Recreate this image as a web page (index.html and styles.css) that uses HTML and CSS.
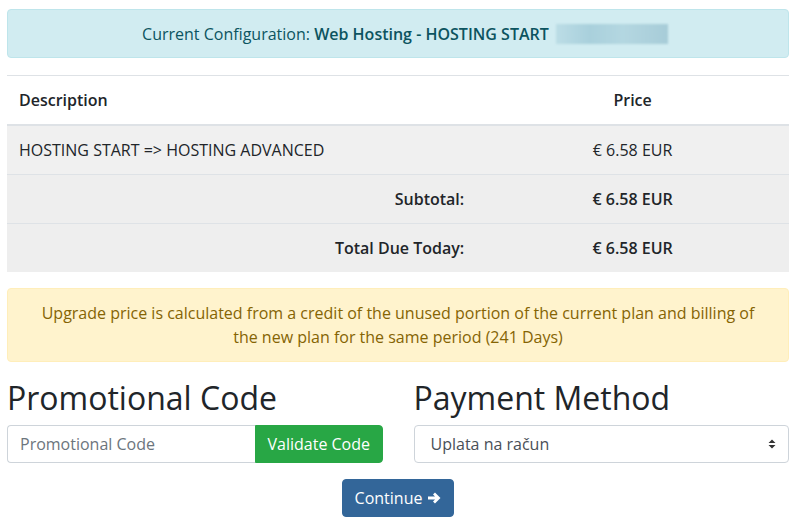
FILE: index.html
```html
<!DOCTYPE html>
<html lang="en">

<head>
    <meta charset="UTF-8">
    <title>Upgrade</title>
    <link rel="stylesheet" href="styles.css">
</head>

<body>
    <div class="container">
        <div class="alert alert-info">
            Current Configuration: <strong>Web Hosting - HOSTING START</strong> <span class="blurred"></span>
        </div>

        <table class="table">
            <thead>
                <tr>
                    <th class="col-desc">Description</th>
                    <th class="col-price">Price</th>
                </tr>
            </thead>
            <tbody>
                <tr class="row-item">
                    <td>HOSTING START =&gt; HOSTING ADVANCED</td>
                    <td class="col-price">€ 6.58 EUR</td>
                </tr>
                <tr class="row-total">
                    <td class="label">Subtotal:</td>
                    <td class="col-price">€ 6.58 EUR</td>
                </tr>
                <tr class="row-total">
                    <td class="label">Total Due Today:</td>
                    <td class="col-price">€ 6.58 EUR</td>
                </tr>
            </tbody>
        </table>

        <div class="alert alert-warning">
            Upgrade price is calculated from a credit of the unused portion of the current plan and billing of the new plan for the same period (241 Days)
        </div>

        <div class="row">
            <div class="col">
                <h2>Promotional Code</h2>
                <div class="input-group">
                    <input type="text" class="form-control" placeholder="Promotional Code">
                    <button class="btn btn-success">Validate Code</button>
                </div>
            </div>
            <div class="col">
                <h2>Payment Method</h2>
                <div class="select">
                    <span>Uplata na račun</span>
                    <svg width="8" height="12" viewBox="0 0 8 12">
                        <path d="M4 1.5 L7.5 5 H0.5 Z M4 10.5 L7.5 7 H0.5 Z" fill="#333" />
                    </svg>
                </div>
            </div>
        </div>

        <div class="actions">
            <button class="btn btn-primary">Continue
                <svg width="14" height="14" viewBox="0 0 14 14">
                    <path d="M1 7 H11 M7 2.5 L11.5 7 L7 11.5" stroke="#fff" stroke-width="2.8" fill="none" />
                </svg>
            </button>
        </div>
    </div>
</body>

</html>
```

FILE: styles.css
```css
* {
    margin: 0;
    padding: 0;
    box-sizing: border-box;
}

body {
    font-family: 'Open Sans', sans-serif;
    font-size: 16px;
    line-height: 1.5;
    color: #212529;
    background: #fff;
}

.container {
    padding: 9px 8px 0 7px;
}

.alert {
    border: 1px solid transparent;
    border-radius: 4px;
    text-align: center;
}

.alert-info {
    background: #d1ecf1;
    border-color: #bee5eb;
    color: #0c5460;
    padding: 12px 20px 12px 34px;
    height: 49px;
    margin-bottom: 17px;
}

.alert-info strong {
    font-weight: 600;
}

.blurred {
    display: inline-block;
    width: 112px;
    height: 20px;
    margin-left: 3px;
    vertical-align: -4px;
    background: linear-gradient(90deg, #bcdde6, #a9d0dc 30%, #b4d7e1 60%, #a7ccd8);
    filter: blur(1px);
}

.table {
    width: 100%;
    border-collapse: collapse;
    margin-bottom: 16px;
}

.table th,
.table td {
    padding: 12px;
    border-top: 1px solid #dee2e6;
}

.table th {
    font-weight: 600;
    text-align: left;
    border-bottom: 2px solid #dee2e6;
}

.col-desc {
    width: 60%;
}

.table .col-price {
    text-align: center;
}

.row-item td {
    background: #f0f0f0;
}

.row-total td {
    background: #eeeeee;
    font-weight: 600;
}

.row-total .label {
    text-align: right;
}

.alert-warning {
    background: #fff3cd;
    border-color: #ffeeba;
    color: #856404;
    padding: 12px 20px;
    line-height: 24px;
    margin-bottom: 17px;
}

.row {
    display: flex;
    gap: 31px;
}

.row .col {
    flex: 1;
}

h2 {
    font-size: 32px;
    font-weight: 400;
    line-height: 1.2;
    margin-bottom: 8px;
    color: #212529;
}

.input-group {
    display: flex;
    height: 38px;
}

.form-control {
    flex: 1;
    min-width: 0;
    border: 1px solid #ced4da;
    border-right: none;
    border-radius: 4px 0 0 4px;
    padding: 6px 12px;
    font-family: inherit;
    font-size: 16px;
    color: #495057;
}

.form-control::placeholder {
    color: #6c757d;
}

.btn {
    font-family: inherit;
    font-size: 16px;
    border: 1px solid transparent;
    color: #fff;
    cursor: pointer;
    white-space: nowrap;
}

.btn-success {
    background: #28a745;
    border-color: #28a745;
    border-radius: 0 4px 4px 0;
    padding: 0 12px;
    width: 128px;
}

.select {
    display: flex;
    align-items: center;
    justify-content: space-between;
    height: 38px;
    border: 1px solid #ced4da;
    border-radius: 4px;
    padding: 6px 12px 6px 16px;
    color: #495057;
}

.actions {
    display: flex;
    justify-content: center;
    margin-top: 16px;
}

.btn-primary {
    background: #336699;
    border-color: #336699;
    border-radius: 4px;
    height: 38px;
    padding: 6px 12px;
    display: flex;
    align-items: center;
    gap: 5px;
}
```
